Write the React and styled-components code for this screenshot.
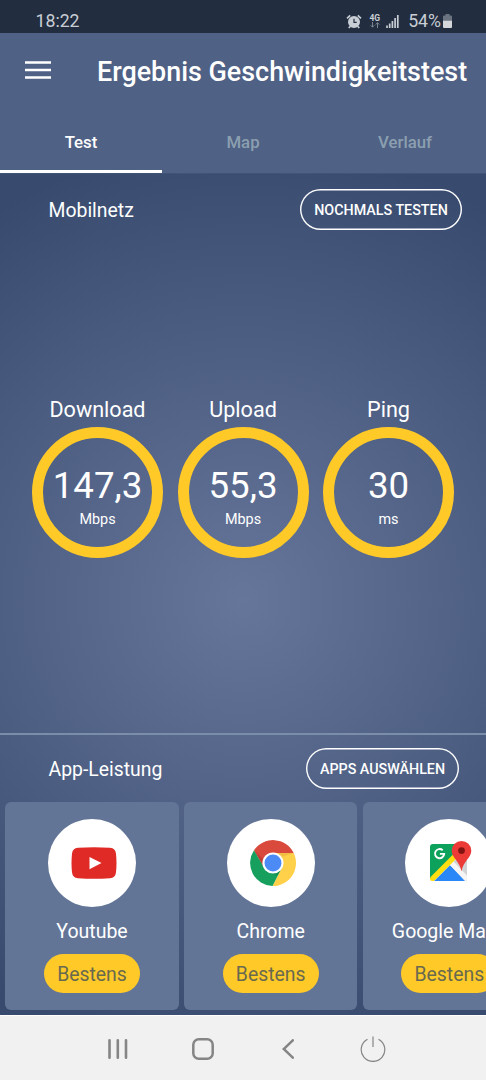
import React from 'react';
import styled, { createGlobalStyle } from 'styled-components';

const GlobalStyle = createGlobalStyle`
  * {
    box-sizing: border-box;
  }

  body {
    margin: 0;
    font-family: Roboto, sans-serif;
    color: #fff;
    background-color: #f1f1f1;
  }

  svg {
    display: block;
    flex-shrink: 0;
  }
`;

const Wrapper = styled.div`
  width: 486px;
  height: 1080px;
  display: flex;
  flex-direction: column;
  overflow: hidden;
`;

const StatusBar = styled.div`
  height: 33px;
  padding: 9px 34px 0 35.5px;
  display: flex;
  align-items: flex-start;
  justify-content: space-between;
  background-color: #222e40;
  color: #c9cdd4;
  font-size: 17.7px;
  line-height: 25px;
`;

const StatusIcons = styled.div`
  display: flex;
  align-items: center;
  height: 24px;
`;

const Network = styled.div`
  margin: 0 6px 0 7px;
  display: flex;
  flex-direction: column;
  align-items: center;
  font-size: 8.5px;
  font-weight: bold;
  line-height: 8px;
`;

const Battery = styled.span`
  margin: 0 2px 0 9px;
`;

const Header = styled.header`
  height: 141px;
  background-color: #4f6184;
  border-bottom: 1px solid #42537a;
`;

const TitleBar = styled.div`
  height: 77px;
  padding-left: 25px;
  display: flex;
  align-items: center;
`;

const MenuButton = styled.div`
  padding-bottom: 3px;
`;

const Title = styled.h1`
  margin: 0 0 0 46px;
  font-size: 26.9px;
  font-weight: 500;
  white-space: nowrap;
`;

const Tabs = styled.nav`
  height: 63px;
  display: grid;
  grid-template-columns: repeat(3, 1fr);
`;

const Tab = styled.div`
  display: flex;
  align-items: center;
  justify-content: center;
  padding-top: 4px;
  font-size: 16.8px;
  font-weight: 500;
  color: ${({ $active }) => ($active ? '#fff' : '#8b9fb0')};
  border-bottom: 3px solid ${({ $active }) => ($active ? '#fff' : 'transparent')};
`;

const Main = styled.main`
  height: 841px;
  display: flex;
  flex-direction: column;
  background: radial-gradient(circle 460px at 243px 426px, #66769a 0%, #384b6f 100%);
`;

const SectionHeader = styled.div`
  display: flex;
  align-items: center;
  justify-content: space-between;
  height: ${({ $height }) => $height}px;
  padding: 0 ${({ $right }) => $right}px 0 48.5px;
  font-size: 19.4px;
`;

const SectionTitle = styled.span`
  padding-top: 2px;
`;

const OutlineButton = styled.button`
  width: ${({ $width }) => $width}px;
  height: 41px;
  padding: 0;
  border: none;
  border-radius: 21px;
  box-shadow: inset 0 0 0 1.4px #fff;
  background-color: transparent;
  color: #fff;
  font-family: inherit;
  font-size: 14.3px;
  font-weight: 500;
  white-space: nowrap;
`;

const Results = styled.section`
  height: 488px;
  padding: 149px 32px 0;
  display: flex;
  justify-content: space-between;
  align-items: flex-start;
`;

const Result = styled.div`
  width: 131px;
  display: flex;
  flex-direction: column;
  align-items: center;
`;

const ResultLabel = styled.div`
  margin-bottom: 1px;
  font-size: 21.6px;
  line-height: 32px;
`;

const Ring = styled.div`
  width: 131px;
  height: 131px;
  border: 11px solid #ffc928;
  border-radius: 50%;
  display: flex;
  flex-direction: column;
  align-items: center;
`;

const Value = styled.div`
  margin-top: 26px;
  font-size: 36.7px;
  line-height: 44px;
`;

const Unit = styled.div`
  margin-top: 3px;
  font-size: 14.4px;
  line-height: 18px;
`;

const Performance = styled.section`
  border-top: 2px solid #7a8ea9;
`;

const Cards = styled.div`
  display: flex;
  gap: 5.3px;
  padding-left: 5.3px;
  overflow: hidden;
`;

const Card = styled.div`
  flex: 0 0 173.4px;
  height: 208px;
  padding-top: 17px;
  border-radius: 6px;
  background-color: #637597;
  display: flex;
  flex-direction: column;
  align-items: center;
`;

const AppIcon = styled.div`
  width: 88px;
  height: 88px;
  padding: 0 0 ${({ $lift }) => $lift}px 4px;
  border-radius: 50%;
  background-color: #fff;
  display: flex;
  align-items: center;
  justify-content: center;
`;

const AppName = styled.div`
  margin-top: 12px;
  font-size: 19.5px;
  line-height: 26px;
  white-space: nowrap;
`;

const Rating = styled.div`
  width: 96px;
  height: 39px;
  margin-top: 9px;
  border-radius: 20px;
  background-color: #ffc928;
  color: #69694f;
  font-size: 19.4px;
  line-height: 42px;
  text-align: center;
`;

const NavBar = styled.footer`
  height: 65px;
  padding: 1px 71px 0 75px;
  border-top: 1px solid #fff;
  background-color: #f1f1f1;
  display: grid;
  grid-template-columns: repeat(4, 1fr);
  align-items: center;
  justify-items: center;
`;

const AlarmIcon = () => (
  <svg width="16" height="15" viewBox="0 0 16 15">
    <circle cx="8" cy="8" r="6" fill="#c9cdd4" />
    <path d="M1 4.3 4.2 1.3M15 4.3 11.8 1.3M4 12.4 2.8 14M12 12.4l1.2 1.6" stroke="#c9cdd4" strokeWidth="1.7" fill="none" />
    <path d="M8 4.800v3.500h2.700" stroke="#222e40" strokeWidth="1.200" fill="none" />
  </svg>
);

const DataArrows = () => (
  <svg width="10" height="6" viewBox="0 0 10 6">
    <path d="M2.5 0v5M.7 3.3l1.8 1.9 1.8-1.9M7.5 6V.8M5.7 2.6 7.5.7l1.8 1.9" stroke="#7c8591" strokeWidth="1" fill="none" />
  </svg>
);

const SignalIcon = () => (
  <svg width="13" height="14" viewBox="0 0 13 14">
    <path d="M1 11.5V14M3.7 9.5V14M6.4 7V14M9.1 4V14M11.8 1V14" stroke="#c9cdd4" strokeWidth="1.7" />
  </svg>
);

const BatteryIcon = () => (
  <svg width="9" height="14" viewBox="0 0 9 14">
    <path d="M2.5 0h4v1.5H8A1 1 0 0 1 9 2.5V7H0V2.5a1 1 0 0 1 1-1h1.5z" fill="#6a737f" />
    <path d="M0 6.7h9V13a1 1 0 0 1-1 1H1a1 1 0 0 1-1-1z" fill="#d5d7da" />
  </svg>
);

const MenuIcon = () => (
  <svg width="26" height="18" viewBox="0 0 26 18">
    <path d="M0 1.5h26M0 9h26M0 16.5h26" stroke="#fff" strokeWidth="2.7" />
  </svg>
);

const YoutubeIcon = () => (
  <svg width="46" height="32" viewBox="0 0 46 32">
    <path
      d="M7 .8Q23-.5 39 .8Q44.5 1.300 45 6.800Q46 16 45 25.200Q44.500 30.700 39 31.200Q23 32.500 7 31.200Q1.500 30.700 1 25.200Q0 16 1 6.800Q1.500 1.300 7 .8z"
      fill="#e02a26"
    />
    <path d="m18.500 10 12 6-12 6.300z" fill="#fff" />
  </svg>
);

const ChromeIcon = () => (
  <svg width="46" height="46" viewBox="0 0 46 46">
    <path d="M4 10.200A23 23 0 0 1 43.700 13H23v10l-9 5z" fill="#d94a3d" />
    <path d="M23 13h20.700A23 23 0 0 1 22.500 46L31.700 28 23 23z" fill="#ffd04a" />
    <path d="M4 10.200 14.300 28 23 33l8.700-5-9.200 18A23 23 0 0 1 4 10.200z" fill="#17a05d" />
    <path d="M23 13h20.700L33 16.500z" fill="#e3ab3c" opacity=".5" />
    <path d="M4 10.200 14.300 28v-8z" fill="#a5332d" opacity=".45" />
    <path d="M31.700 28 27.800 35.600 20 33z" fill="#0f7a45" opacity=".45" />
    <circle cx="23" cy="23" r="10.600" fill="#fff" />
    <circle cx="23" cy="23" r="8.500" fill="#4c8bf5" />
  </svg>
);

const MapsIcon = () => (
  <svg width="42" height="40" viewBox="0 0 42 40">
    <path d="M3 3h25l-3 14L0 38V6a3 3 0 0 1 3-3z" fill="#0da25b" />
    <path d="M20 24 35.500 40H4z" fill="#2a87f7" />
    <path d="m20 24 7-7 10-4v25.500a1.500 1.500 0 0 1-1.500 1.500z" fill="#d2d3d5" />
    <path d="m20 24 3.500-3.500L37 34.500V38a2 2 0 0 1-2 2z" fill="#f5f5f5" />
    <path d="M.5 36 23 13.500l4 3.500L4 40H2a2 2 0 0 1-2-2z" fill="#fdde10" />
    <path d="M12.700 9.200A4.600 4.600 0 1 0 14.200 12.900H9.900" stroke="#fff" strokeWidth="1.900" fill="none" />
    <path d="M31.500 0A9.800 9.800 0 0 1 41.300 9.800c0 7.400-8 10-9.800 20.700-1.800-10.700-9.800-13.300-9.800-20.700A9.800 9.800 0 0 1 31.500 0z" fill="#ec3a37" />
    <circle cx="31.500" cy="9.600" r="3.400" fill="#841412" />
  </svg>
);

const RecentsIcon = () => (
  <svg width="20" height="20" viewBox="0 0 20 20">
    <path d="M1.500 1.300v17.400M9.800 1.300v17.400M18 1.300v17.400" stroke="#858585" strokeWidth="2.600" strokeLinecap="round" />
  </svg>
);

const HomeIcon = () => (
  <svg width="22" height="22" viewBox="0 0 22 22">
    <rect x="1.300" y="1.300" width="19.400" height="19.400" rx="5.500" stroke="#858585" strokeWidth="2.500" fill="none" />
  </svg>
);

const BackIcon = () => (
  <svg width="12" height="20" viewBox="0 0 12 20">
    <path d="M10.800 1.300 1.700 10l9.100 8.700" stroke="#858585" strokeWidth="2.500" strokeLinecap="round" fill="none" />
  </svg>
);

const PowerIcon = () => (
  <svg width="26" height="26" viewBox="0 0 26 26">
    <path d="M7.500 3.200a11.800 11.800 0 1 0 11 0M13 .5V11" stroke="#858585" strokeWidth="1.200" fill="none" />
  </svg>
);

const tabs = ['Test', 'Map', 'Verlauf'];

const results = [
  { label: 'Download', value: '147,3', unit: 'Mbps' },
  { label: 'Upload', value: '55,3', unit: 'Mbps' },
  { label: 'Ping', value: '30', unit: 'ms' },
];

const apps = [
  { name: 'Youtube', Icon: YoutubeIcon, lift: 0 },
  { name: 'Chrome', Icon: ChromeIcon, lift: 0 },
  { name: 'Google Maps', Icon: MapsIcon, lift: 5 },
];

const App = () => (
  <>
    <GlobalStyle />
    <Wrapper>
      <StatusBar>
        <span>18:22</span>
        <StatusIcons>
          <AlarmIcon />
          <Network>
            4G
            <DataArrows />
          </Network>
          <SignalIcon />
          <Battery>54%</Battery>
          <BatteryIcon />
        </StatusIcons>
      </StatusBar>
      <Header>
        <TitleBar>
          <MenuButton><MenuIcon /></MenuButton>
          <Title>Ergebnis Geschwindigkeitstest</Title>
        </TitleBar>
        <Tabs>
          {tabs.map((tab, i) => (
            <Tab key={tab} $active={i === 0}>{tab}</Tab>
          ))}
        </Tabs>
      </Header>
      <Main>
        <SectionHeader $height={71} $right={24}>
          <SectionTitle>Mobilnetz</SectionTitle>
          <OutlineButton $width={162}>NOCHMALS TESTEN</OutlineButton>
        </SectionHeader>
        <Results>
          {results.map(({ label, value, unit }) => (
            <Result key={label}>
              <ResultLabel>{label}</ResultLabel>
              <Ring>
                <Value>{value}</Value>
                <Unit>{unit}</Unit>
              </Ring>
            </Result>
          ))}
        </Results>
        <Performance>
          <SectionHeader $height={67} $right={27}>
            <SectionTitle>App-Leistung</SectionTitle>
            <OutlineButton $width={153}>APPS AUSWÄHLEN</OutlineButton>
          </SectionHeader>
          <Cards>
            {apps.map(({ name, Icon, lift }) => (
              <Card key={name}>
                <AppIcon $lift={lift}><Icon /></AppIcon>
                <AppName>{name}</AppName>
                <Rating>Bestens</Rating>
              </Card>
            ))}
          </Cards>
        </Performance>
      </Main>
      <NavBar>
        <RecentsIcon />
        <HomeIcon />
        <BackIcon />
        <PowerIcon />
      </NavBar>
    </Wrapper>
  </>
);

export default App;
